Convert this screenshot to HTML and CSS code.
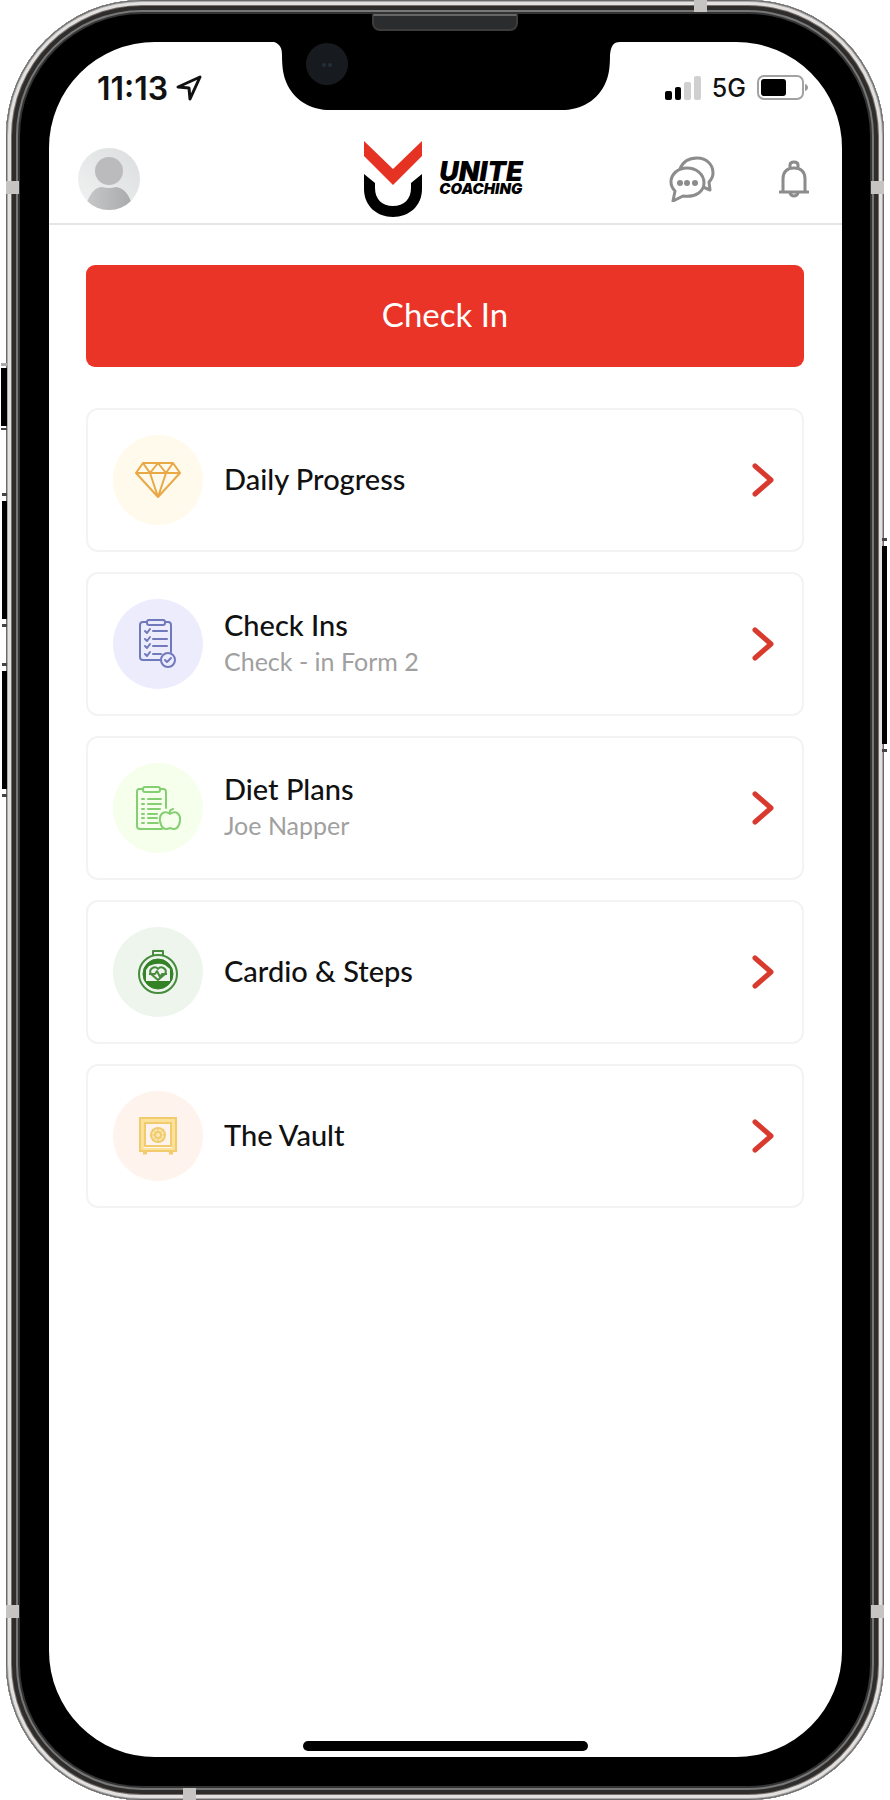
FILE: index.html
```html
<!DOCTYPE html>
<html lang="en">
<head>
<meta charset="utf-8">
<meta name="viewport" content="width=device-width, initial-scale=1">
<title>Unite Coaching</title>
<link rel="stylesheet" href="styles.css">
</head>
<body>
<div class="phone">
  <span class="key key-mute"></span>
  <span class="key key-up"></span>
  <span class="key key-down"></span>
  <span class="key key-power"></span>
  <span class="band band-top"></span>
  <span class="band band-bottom"></span>
  <span class="band band-left band-high"></span>
  <span class="band band-right band-high"></span>
  <span class="band band-left band-low"></span>
  <span class="band band-right band-low"></span>
  <span class="speaker"></span>
  <div class="screen">
    <svg class="notch" viewBox="0 0 348 70" aria-hidden="true">
      <path d="M0 0V2H2C8 4 10 8 10 15C10 26 11 33 13 39C19 57 35 69 55 70H293C313 69 329 57 335 39C337 33 338 26 338 15C339 6 341 2 348 2V0Z" fill="#000"/>
      <circle cx="55" cy="24" r="21" fill="#171b20"/>
      <circle cx="52" cy="25" r="2" fill="#22303b"/><circle cx="58" cy="25" r="2" fill="#22303b"/>
    </svg>
    <div class="status">
      <div class="status-side left">
        <span class="time">11:13</span>
        <svg width="26" height="26" viewBox="0 0 26 26" aria-label="Location"><path d="M2 12L24 2L14 24L13 13Z" fill="none" stroke="#111" stroke-width="3" stroke-linejoin="round"/></svg>
      </div>
      <div class="status-side">
        <svg width="36" height="24" viewBox="0 0 36 24" aria-label="Signal"><rect x="0" y="15" width="7" height="9" rx="2"/><rect x="10" y="11" width="6" height="13" rx="2"/><rect x="19" y="6" width="7" height="18" rx="2" fill="#d0d0d0"/><rect x="29" y="0" width="7" height="24" rx="2" fill="#d0d0d0"/></svg>
        <span class="network">5G</span>
        <svg width="52" height="26" viewBox="0 0 52 26" aria-label="Battery"><rect x="1" y="1" width="45" height="23" rx="6" fill="none" stroke="#a2a2a2" stroke-width="2"/><rect x="4" y="4" width="25" height="17" rx="3"/><path d="M48 9C52 10 52 15 48 16Z" fill="#999"/></svg>
      </div>
    </div>
    <header class="header">
      <button class="plain" type="button" aria-label="Profile">
        <svg width="62" height="62" viewBox="0 0 62 62"><defs><linearGradient id="bg" x1="0" y1="1" x2="1" y2="0"><stop offset="0" stop-color="#f1f3f3"/><stop offset="1" stop-color="#dcddde"/></linearGradient><linearGradient id="fg" x1="0" x2="1"><stop offset="0" stop-color="#c6c7c9"/><stop offset="1" stop-color="#aaabad"/></linearGradient><clipPath id="disc"><circle cx="31" cy="31" r="31"/></clipPath></defs><g clip-path="url(#disc)"><rect width="62" height="62" fill="url(#bg)"/><circle cx="31" cy="23" r="14" fill="#bbbbbe"/><path d="M9 54C13 44 18 39 24 39Q31 41 38 39C45 40 50 45 53 54L46 62H16Z" fill="url(#fg)"/></g></svg>
      </button>
      <a class="brand" href="#" aria-label="Unite Coaching">
        <svg width="58" height="76" viewBox="0 0 58 76"><path d="M0 0L29 28L58 0V15L29 44L0 15Z" fill="#e63223"/><path d="M0 33L11 42V47C11 58 18 65 29 65S47 58 47 47V42L58 33V48C58 65 45 76 29 76S0 65 0 48Z"/></svg>
        <span class="brand-text"><span class="brand-name">UNITE</span><span class="brand-sub">COACHING</span></span>
      </a>
      <div class="actions">
        <button class="plain" type="button" aria-label="Messages"><svg width="46" height="46" viewBox="0 0 46 46" fill="none" stroke="#8c8c8c" stroke-width="3" stroke-linejoin="round"><path d="M11 13C14 5 21 2 28 2C38 2 44 9 44 17C44 21 42 24 40 26L41 34L34 31"/><path d="M18 12C9 12 2 18 2 26C2 31 4 33 6 35L4 45L14 40C27 42 35 35 35 27C35 18 27 12 18 12Z"/><g fill="#8c8c8c" stroke="none"><circle cx="11" cy="27" r="3"/><circle cx="18" cy="27" r="3"/><circle cx="26" cy="27" r="3"/></g></svg></button>
        <button class="plain" type="button" aria-label="Notifications"><svg width="30" height="38" viewBox="0 0 30 38" fill="none" stroke="#8c8c8c" stroke-width="3" stroke-linecap="round"><path d="M11 8V5Q11 2 15 2T19 5V8M4 32V19C4 11 9 8 15 8S26 11 26 19V32M1 32H29M11 33Q12 36 15 36T19 33"/></svg></button>
      </div>
    </header>
    <main class="main">
      <button class="checkin" type="button">Check In</button>
      <nav class="list">
        <a class="card" href="#">
          <span class="badge gold"><svg width="46" height="36" viewBox="0 0 46 36" fill="none" stroke="#e9a846" stroke-width="2" stroke-linejoin="round"><path d="M8 1H38L45 11L23 35L1 11ZM1 11H45M8 1L15 11L23 1L31 11L38 1M15 11L23 35L31 11"/></svg></span>
          <span class="label"><span class="title">Daily Progress</span></span>
          <svg class="chevron" width="22" height="34" viewBox="0 0 22 34"><path d="M3 3L19 17L3 31"/></svg>
        </a>
        <a class="card" href="#">
          <span class="badge blue"><svg width="40" height="50" viewBox="0 0 40 50" fill="none" stroke="#7179bd" stroke-width="2" stroke-linecap="round" stroke-linejoin="round"><path d="M9 3H5Q2 3 2 6V38Q2 41 5 41H23M27 3H30Q33 3 33 6V33"/><rect x="9" y="1" width="18" height="5" rx="2"/><path d="M7 12L9 14L12 10M15 12H29M7 20L9 22L12 18M15 20H29M7 27L9 29L12 25M15 27H29M7 35L9 37L12 33M15 35H23"/><circle cx="30" cy="41" r="7"/><path d="M27 41L29 43L33 39"/></svg></span>
          <span class="label"><span class="title">Check Ins</span><span class="sub">Check - in Form 2</span></span>
          <svg class="chevron" width="22" height="34" viewBox="0 0 22 34"><path d="M3 3L19 17L3 31"/></svg>
        </a>
        <a class="card" href="#">
          <span class="badge lime"><svg width="46" height="46" viewBox="0 0 46 46" fill="none" stroke="#83cf71" stroke-width="2" stroke-linecap="round" stroke-linejoin="round"><path d="M8 4H4Q2 4 2 7V41Q2 44 5 44H27M25 4H28Q31 4 31 7V23"/><rect x="8" y="2" width="17" height="5" rx="2"/><path d="M7 14H9M13 14H26M7 19H9M13 19H26M7 24H9M13 24H25M7 29H9M13 29H22M7 33H9M13 33H22M7 38H9M13 38H23"/><path d="M35 29C29 25 24 29 25 36C26 42 29 46 35 43C41 46 44 42 45 36C46 29 41 25 35 29ZM35 29Q34 25 38 24" fill="#f5ffec"/></svg></span>
          <span class="label"><span class="title">Diet Plans</span><span class="sub">Joe Napper</span></span>
          <svg class="chevron" width="22" height="34" viewBox="0 0 22 34"><path d="M3 3L19 17L3 31"/></svg>
        </a>
        <a class="card" href="#">
          <span class="badge green"><svg width="40" height="46" viewBox="0 0 40 46" fill="none" stroke="#478c3d" stroke-width="2" stroke-linejoin="round"><path d="M15 6V2H25V6"/><circle cx="20" cy="25" r="19" stroke-width="2"/><circle cx="20" cy="25" r="15" fill="#338326" stroke="#338326" stroke-width="1"/><path d="M11 17Q20 13 27 16L32 20V32H8V21Z" fill="#edf5ed" stroke="none"/><path d="M20 31L13 25C10 20 17 16 20 20C23 16 30 20 27 25ZM11 25H17L19 22L22 28L24 25H29"/></svg></span>
          <span class="label"><span class="title">Cardio &amp; Steps</span></span>
          <svg class="chevron" width="22" height="34" viewBox="0 0 22 34"><path d="M3 3L19 17L3 31"/></svg>
        </a>
        <a class="card" href="#">
          <span class="badge peach"><svg width="38" height="38" viewBox="0 0 38 38" fill="none" stroke="#f1cb6d" stroke-width="2"><rect x="3" y="3" width="32" height="30" stroke="#fae29b" stroke-width="4"/><rect x="1" y="1" width="36" height="33"/><rect x="6" y="6" width="26" height="23"/><circle cx="19" cy="18" r="7" fill="#fae8b8"/><circle cx="19" cy="18" r="3"/><path d="M19 10V15M19 21V26M11 18H16M22 18H27M13 12L17 16M21 20L25 24M25 12L21 16M17 20L13 24" stroke-width="1"/><path d="M4 36H8M30 36H34" stroke-width="3"/></svg></span>
          <span class="label"><span class="title">The Vault</span></span>
          <svg class="chevron" width="22" height="34" viewBox="0 0 22 34"><path d="M3 3L19 17L3 31"/></svg>
        </a>
      </nav>
    </main>
    <div class="home"></div>
  </div>
</div>
</body>
</html>
```
FILE: styles.css
```css
* { box-sizing: border-box; }

body {
  margin: 0;
  background: #fff;
  font-family: Lato, sans-serif;
  color: #111;
}

svg { display: block; flex: none; }

/* Device shell */
.phone {
  position: relative;
  display: flex;
  min-height: 100vh;
  margin: 0 6px;
  padding: 42px 42px 43px 43px;
  border-radius: 136px;
  background: #000;
  box-shadow:
    inset 0 0 0 1px #6b6969,
    inset 0 0 0 2px #aaa,
    inset 0 0 0 5px #e2e1e0,
    inset 0 0 0 6px #77706c,
    inset 0 0 0 10px #2f2d2c,
    inset 0 0 0 12px #777,
    inset 0 0 0 14px #333;
}

.key { position: absolute; background: #000; }
.key::before, .key::after {
  content: "";
  position: absolute;
  left: 0;
  right: 0;
  height: 3px;
  background: #444;
}
.key::before { top: -8px; }
.key::after { bottom: -8px; }
.key-mute { left: -5px; top: 368px; width: 6px; height: 58px; }
.key-mute::before { top: -5px; background: #aaa; }
.key-mute::after { bottom: -4px; height: 2px; }
.key-up { left: -4px; top: 501px; width: 5px; height: 118px; }
.key-down { left: -4px; top: 671px; width: 5px; height: 118px; }
.key-power { right: -3px; top: 546px; width: 5px; height: 198px; }

.band { position: absolute; background: #c6c4c2; }
.band-top { top: 0; right: 177px; width: 13px; height: 12px; }
.band-bottom { bottom: 0; left: 177px; width: 13px; height: 12px; }
.band-left { left: 0; width: 13px; height: 13px; }
.band-right { right: 0; width: 13px; height: 13px; }
.band-high { top: 181px; }
.band-low { bottom: 182px; }

.speaker {
  position: absolute;
  top: 14px;
  left: 50%;
  width: 146px;
  height: 17px;
  margin-left: -73px;
  border: 2px solid #3c3c3c;
  border-top-color: #666;
  border-radius: 2px 2px 8px 8px;
  background: #2b2c2d;
}

.screen {
  position: relative;
  display: flex;
  flex: 1;
  flex-direction: column;
  min-width: 0;
  border-radius: 106px;
  background: #fff;
}

.notch {
  position: absolute;
  top: -2px;
  left: 50%;
  width: 348px;
  height: 70px;
  margin-left: -174px;
}

.status {
  display: flex;
  justify-content: space-between;
  padding: 28px 33px 0 48px;
  font-family: Inter, sans-serif;
}
.status-side { display: flex; align-items: center; gap: 11px; height: 36px; }
.left { gap: 8px; }
.time { font-size: 32px; font-weight: 600; }
.network { font-size: 25px; font-weight: 500; }

/* App header */
.header {
  display: grid;
  grid-template-columns: 1fr auto 1fr;
  align-items: center;
  height: 119px;
  padding: 28px 33px 0 29px;
  border-bottom: 2px solid #e6e6e6;
}
.plain {
  justify-self: start;
  padding: 0;
  border: 0;
  background: none;
}
.brand {
  display: flex;
  align-items: center;
  gap: 17px;
  color: #000;
  text-decoration: none;
}
.brand-text {
  display: flex;
  flex-direction: column;
  font-family: Inter, sans-serif;
  font-style: italic;
  font-weight: 900;
}
.brand-name { font-size: 27px; line-height: 21px; }
.brand-sub { font-size: 15px; line-height: 14px; }
.actions {
  display: flex;
  align-items: center;
  justify-content: flex-end;
  gap: 64px;
}

/* Content */
.main { flex: 1; padding: 40px 38px 0 37px; }
.checkin {
  display: block;
  width: 100%;
  height: 102px;
  padding: 0 0 4px;
  border: 0;
  border-radius: 9px;
  background: #ea3427;
  color: #fff;
  font-family: Lato, sans-serif;
  font-size: 33px;
}
.list { display: grid; gap: 20px; margin-top: 41px; }
.card {
  display: flex;
  align-items: center;
  gap: 21px;
  min-height: 144px;
  padding: 0 28px 0 25px;
  border: 2px solid #f3f3f3;
  border-radius: 12px;
  color: #111;
  text-decoration: none;
}
.badge {
  display: flex;
  flex: none;
  align-items: center;
  justify-content: center;
  width: 90px;
  height: 90px;
  border-radius: 50%;
}
.gold { background: #fffaeb; }
.blue { background: #ececfd; }
.lime { background: #f5ffec; }
.green { background: #edf5ed; }
.peach { background: #fff3ed; }
.label { display: flex; flex: 1; flex-direction: column; padding-bottom: 2px; }
.title { font-size: 29px; font-weight: 500; line-height: 36px; }
.sub { color: #a0a0a0; font-size: 25px; line-height: 36px; }
.chevron { fill: none; stroke: #d93a2e; stroke-width: 5; stroke-linecap: round; stroke-linejoin: round; }

.home {
  width: 285px;
  height: 10px;
  margin: 0 auto 6px;
  border-radius: 5px;
  background: #000;
}
```
